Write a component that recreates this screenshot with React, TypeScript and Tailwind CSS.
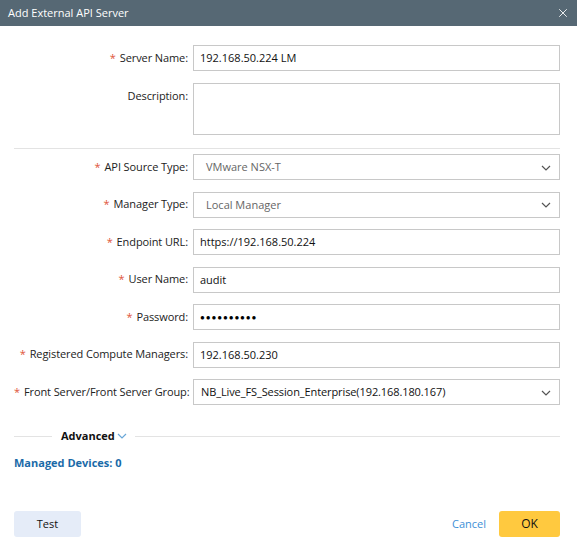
import { X } from 'lucide-react';

const font = { fontFamily: '"Open Sans", "Noto Sans", sans-serif' };

function Label({ text, required }: { text: string; required?: boolean }) {
  return (
    <div className="w-[174px] shrink-0 text-right text-[11px] tracking-[-0.1px] text-[#222] whitespace-nowrap">
      {required && <span className="text-[#e0553a] mr-[4px]">*</span>}
      {text}:
    </div>
  );
}

function Chevron({ className }: { className?: string }) {
  return (
    <svg width="10" height="6" viewBox="0 0 10 6" className={className}>
      <path d="M1 1l4 4 4-4" fill="none" stroke="currentColor" strokeWidth="1.2" />
    </svg>
  );
}

function TextRow({ label, value, required }: { label: string; value: string; required?: boolean }) {
  return (
    <div className="flex items-center gap-[5px]">
      <Label text={label} required={required} />
      <div className="flex-1 h-[26px] border border-[#c8c8c8] flex items-center px-[6px] pt-[1px] text-[11px] text-[#111] whitespace-nowrap overflow-hidden">
        {value}
      </div>
    </div>
  );
}

function SelectRow({
  label,
  value,
  muted,
}: {
  label: string;
  value: string;
  muted?: boolean;
}) {
  return (
    <div className="flex items-center gap-[5px]">
      <Label text={label} required />
      <div className="flex-1 h-[26px] border border-[#c8c8c8] flex items-center justify-between pt-[1px] text-[11px] whitespace-nowrap">
        <span className={muted ? 'pl-[12px] text-[#666]' : 'pl-[7px] tracking-[-0.1px] text-[#111]'}>{value}</span>
        <Chevron className="mr-[8px] text-[#555]" />
      </div>
    </div>
  );
}

export default function App() {
  return (
    <div className="w-[577px] h-[554px] bg-white flex flex-col" style={font}>
      {/* Header */}
      <div className="h-[26px] bg-[#566874] flex items-center justify-between pl-[8px] pr-[7px]">
        <span className="text-white text-[11px]">Add External API Server</span>
        <X size={14} strokeWidth={1.5} className="text-white" />
      </div>

      <div className="flex-1 flex flex-col pl-[14px] pr-[17px]">
        <div className="mt-[19px] flex flex-col gap-[12px]">
          <TextRow label="Server Name" value="192.168.50.224 LM" required />
          <div className="flex items-start gap-[5px]">
            <div className="pt-[5px]">
              <Label text="Description" />
            </div>
            <div className="flex-1 h-[52px] border border-[#c8c8c8]" />
          </div>
        </div>

        <div className="mt-[13px] mb-[5px] border-t border-[#e3e3e3]" />

        <div className="flex flex-col gap-[11.5px]">
          <SelectRow label="API Source Type" value="VMware NSX-T" muted />
          <SelectRow label="Manager Type" value="Local Manager" muted />
          <TextRow label="Endpoint URL" value="https://192.168.50.224" required />
          <TextRow label="User Name" value="audit" required />
          <div className="flex items-center gap-[5px]">
            <Label text="Password" required />
            <div className="flex-1 h-[26px] border border-[#c8c8c8] flex items-center px-[6px] text-[8px] tracking-[0.9px] text-black">
              ●●●●●●●●●●
            </div>
          </div>
          <TextRow label="Registered Compute Managers" value="192.168.50.230" required />
          <SelectRow label="Front Server/Front Server Group" value="NB_Live_FS_Session_Enterprise(192.168.180.167)" />
        </div>

        {/* Advanced */}
        <div className="mt-[23px] flex items-center">
          <div className="w-[38px] border-t border-[#e3e3e3]" />
          <span className="ml-[9px] text-[11px] font-bold text-[#111]">Advanced</span>
          <Chevron className="ml-[2px] text-[#6aa7d8]" />
          <div className="ml-[8px] flex-1 border-t border-[#e3e3e3]" />
        </div>

        <div className="mt-[10px] text-[11px] font-bold text-[#1a6aa8]">Managed Devices: 0</div>

        {/* Footer */}
        <div className="mt-auto mb-[17px] flex items-center justify-between">
          <button className="w-[67px] h-[26px] rounded-[3px] bg-[#e5ecf8] text-[11px] text-[#111]">Test</button>
          <div className="flex items-center gap-[13px]">
            <button className="text-[11px] text-[#3d8fd6]">Cancel</button>
            <button className="w-[61px] h-[26px] rounded-[3px] bg-[#ffc93f] text-[12px] text-[#111]">OK</button>
          </div>
        </div>
      </div>
    </div>
  );
}
